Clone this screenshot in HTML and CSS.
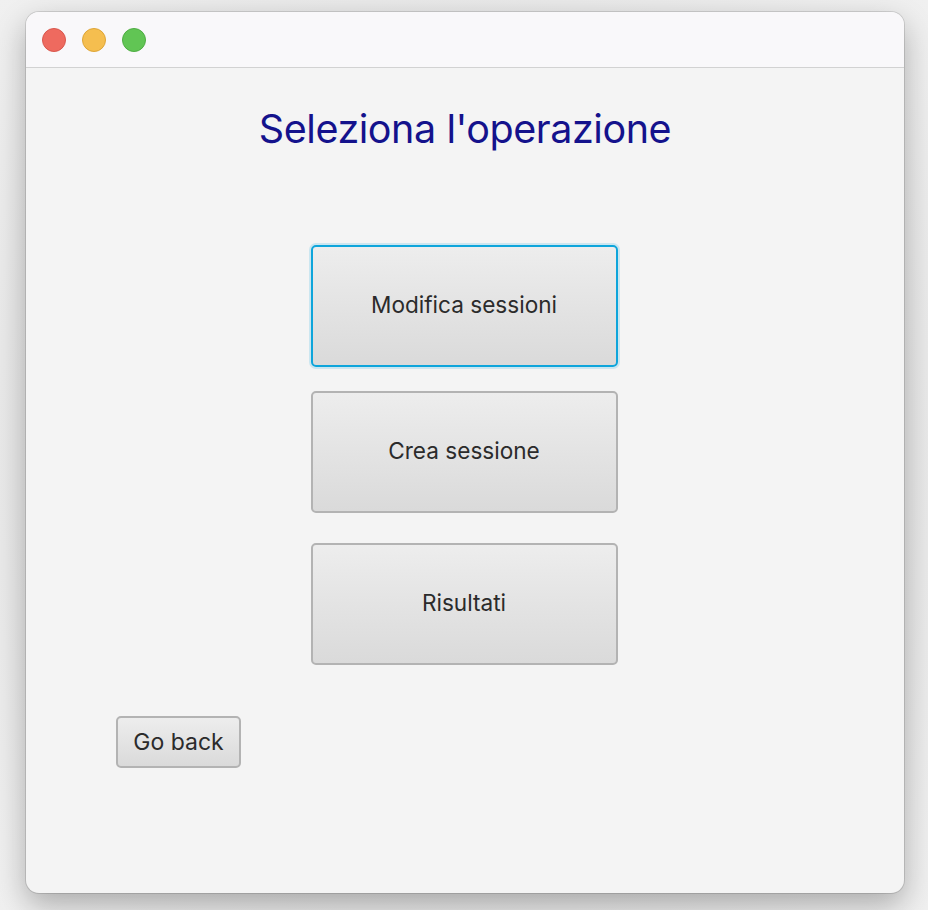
FILE: index.html
```html
<!DOCTYPE html>
<html>
<head>
<meta charset="utf-8">
<link rel="stylesheet" href="styles.css">
</head>
<body>
<div class="window">
  <div class="titlebar">
    <span class="light red"></span>
    <span class="light yellow"></span>
    <span class="light green"></span>
  </div>
  <div class="content">
    <h1 class="title">Seleziona l'operazione</h1>
    <div class="actions">
      <button class="btn big focused">Modifica sessioni</button>
      <button class="btn big second">Crea sessione</button>
      <button class="btn big third">Risultati</button>
    </div>
    <div class="back-row">
      <button class="btn small">Go back</button>
    </div>
  </div>
</div>
</body>
</html>
```
FILE: styles.css
```css
html, body {
  margin: 0;
  padding: 0;
  width: 928px;
  height: 910px;
  background: #ececec;
  overflow: hidden;
}
body {
  padding: 12px 24px 0 26px;
  box-sizing: border-box;
  font-family: Inter, "Noto Sans", sans-serif;
  background: radial-gradient(ellipse at center, #d8d8d8 0%, #e6e6e6 60%, #f0f0f0 100%);
}
.window {
  width: 878px;
  height: 881px;
  background: #f4f4f4;
  border-radius: 13px;
  box-shadow: 0 0 0 1px rgba(0,0,0,0.12), 0 12px 30px rgba(0,0,0,0.28);
  overflow: hidden;
  display: flex;
  flex-direction: column;
}
.titlebar {
  height: 56px;
  background: #f9f8fa;
  border-bottom: 1px solid #d2d2d2;
  box-sizing: border-box;
  display: flex;
  align-items: center;
  padding: 0 0 0 16px;
  gap: 16px;
  flex: none;
}
.light {
  width: 24px;
  height: 24px;
  border-radius: 50%;
  box-sizing: border-box;
}
.red { background: #ee6a5f; border: 1px solid #d9574d; }
.yellow { background: #f5be4f; border: 1px solid #dea536; }
.green { background: #61c554; border: 1px solid #4ead42; }
.content {
  flex: 1;
  display: flex;
  flex-direction: column;
  align-items: center;
}
.title {
  margin: 37px 0 0 0;
  font-weight: 400;
  font-size: 39.5px;
  line-height: 48px;
  color: #14128c;
  letter-spacing: -0.45px;
}
.actions {
  margin-top: 92px;
  margin-right: 2px;
  display: flex;
  flex-direction: column;
  align-items: center;
}
.btn {
  font-family: Inter, "Noto Sans", sans-serif;
  color: #2b2b2b;
  background: linear-gradient(#ededed, #dadada);
  border: 2px solid #b3b3b3;
  border-radius: 5px;
  box-sizing: border-box;
  padding: 0;
}
.big {
  width: 307px;
  height: 122px;
  font-size: 22.6px;
  padding-bottom: 3px;
}
.focused {
  border-color: #0ea5db;
  box-shadow: 0 0 0 2px rgba(14,165,219,0.18);
}
.second { margin-top: 24px; }
.third { margin-top: 30px; }
.back-row {
  align-self: stretch;
  padding-left: 90px;
  margin-top: 51px;
}
.small {
  width: 125px;
  height: 52px;
  font-size: 23px;
}
```
